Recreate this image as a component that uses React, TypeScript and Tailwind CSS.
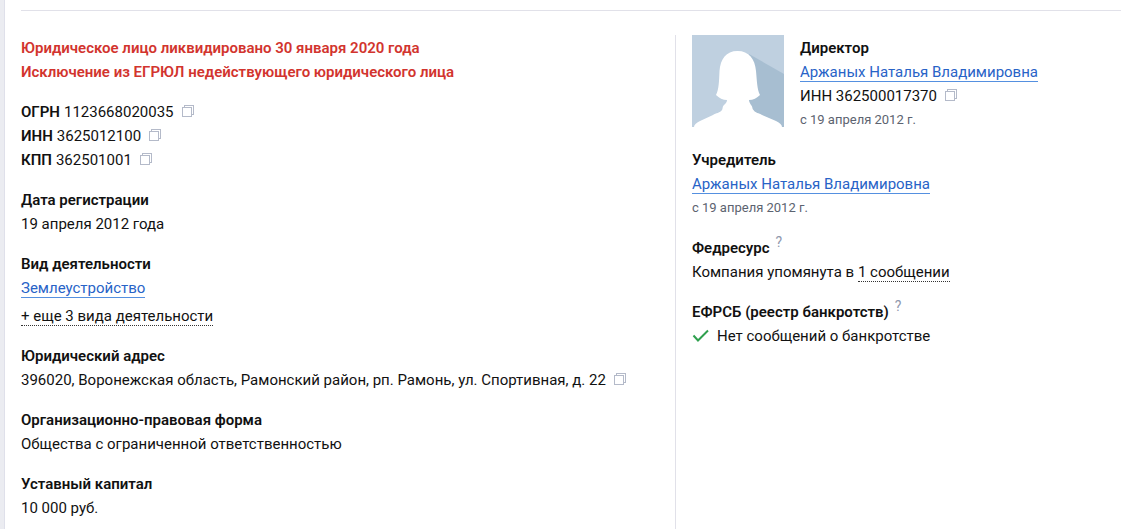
import type { ReactNode } from "react";

interface SectionProps {
  title: string;
  hint?: boolean;
  children: ReactNode;
}

function Section({ title, hint, children }: SectionProps) {
  return (
    <section>
      <div className="flex items-start gap-1.5">
        <h2 className="font-semibold">{title}</h2>
        {hint && (
          <button type="button" aria-label={`Справка: ${title}`} className="text-sm leading-3 text-[#8f98ad]">
            ?
          </button>
        )}
      </div>
      {children}
    </section>
  );
}

function CopyButton({ label }: { label: string }) {
  return (
    <button type="button" aria-label={`Скопировать ${label}`} className="ml-2 inline-block align-baseline">
      <svg width="12" height="12" viewBox="0 0 12 12" fill="none" stroke="#b4bac9" shapeRendering="crispEdges">
        <path d="M.5 2.5h9v9h-9zM2.5 2.5v-2h9v9h-2" />
      </svg>
    </button>
  );
}

function Code({ name, value }: { name: string; value: string }) {
  return (
    <div className="h-6">
      <dt className="mr-1 inline font-semibold">{name}</dt>
      <dd className="inline">
        {value}
        <CopyButton label={name} />
      </dd>
    </div>
  );
}

function PersonLink() {
  return (
    <a href="#person" className="border-b border-[#5590e0] text-[#2863c7]">
      Аржаных Наталья Владимировна
    </a>
  );
}

function Avatar() {
  return (
    <svg width="92" height="92" viewBox="0 0 92 92" className="-mt-px shrink-0" aria-hidden="true">
      <path fill="#bfd0e0" d="M0 0h92v92H0z" />
      <path fill="#a7bed1" d="M57 19l35 20v53H56V50z" />
      <path
        fill="#fff"
        d="M45.500 16C34 16 28.500 24 27.500 36C27 46 27 54 24 60C27 63 31 65 35 65C35 67 34 68 32 70C30 72 31 74 30 75C28 78 24 78 21 80L8 86C4 88 2 90 2 92H90C90 90 88 88 84 86L70 80C67 78 63 78 61.500 75C60 74 61 72 59 70C58 68 57 67 57 65C61 65 65 63 68 60C65 54 65 46 64 36C63 24 57 16 45.500 16Z"
      />
    </svg>
  );
}

export default function App() {
  return (
    <div className="flex min-h-screen bg-white font-['Roboto',sans-serif] text-[15px] leading-6 text-[#111]">
      <div className="w-[5px] shrink-0 border-r border-[#dfe0ea] bg-[#ebecf1]" />
      <main className="flex min-w-0 flex-1 flex-col pt-2.5 pl-4">
        <hr className="border-[#e1e1e9]" />
        <div className="mt-6 grid flex-1 grid-cols-[654fr_446fr]">
          <div className="space-y-4 pt-px">
            <div className="font-semibold text-[#d2342e]">
              <p>Юридическое лицо ликвидировано 30 января 2020 года</p>
              <p>Исключение из ЕГРЮЛ недействующего юридического лица</p>
            </div>
            <dl>
              <Code name="ОГРН" value="1123668020035" />
              <Code name="ИНН" value="3625012100" />
              <Code name="КПП" value="362501001" />
            </dl>
            <Section title="Дата регистрации">
              <p>19 апреля 2012 года</p>
            </Section>
            <Section title="Вид деятельности">
              <p>
                <a href="#activity" className="border-b border-[#5590e0] text-[#2863c7]">
                  Землеустройство
                </a>
              </p>
              <p className="mt-1">
                <a href="#activities" className="border-b border-dotted border-[#333]">
                  + еще 3 вида деятельности
                </a>
              </p>
            </Section>
            <Section title="Юридический адрес">
              <p>
                396020, Воронежская область, Рамонский район, рп. Рамонь, ул. Спортивная, д. 22
                <CopyButton label="адрес" />
              </p>
            </Section>
            <Section title="Организационно-правовая форма">
              <p>Общества с ограниченной ответственностью</p>
            </Section>
            <Section title="Уставный капитал">
              <p>10 000 руб.</p>
            </Section>
          </div>
          <div className="space-y-4 border-l border-[#e1e1e9] pt-px pl-4">
            <div className="flex gap-4">
              <Avatar />
              <Section title="Директор">
                <p>
                  <PersonLink />
                </p>
                <p>
                  ИНН 362500017370
                  <CopyButton label="ИНН директора" />
                </p>
                <p className="text-[13px] leading-6 text-[#5c6370]">с 19 апреля 2012 г.</p>
              </Section>
            </div>
            <Section title="Учредитель">
              <p>
                <PersonLink />
              </p>
              <p className="text-[13px] leading-6 text-[#5c6370]">с 19 апреля 2012 г.</p>
            </Section>
            <Section title="Федресурс" hint>
              <p>
                Компания упомянута в{" "}
                <a href="#messages" className="border-b border-dotted border-[#333]">
                  1 сообщении
                </a>
              </p>
            </Section>
            <Section title="ЕФРСБ (реестр банкротств)" hint>
              <p className="flex items-center gap-2">
                <svg width="17" height="14" viewBox="0 0 17 14" fill="none" stroke="#2fa04e" strokeWidth="2" aria-hidden="true">
                  <path d="M1.500 6.500L6 11.500L16 1.500" />
                </svg>
                Нет сообщений о банкротстве
              </p>
            </Section>
          </div>
        </div>
      </main>
    </div>
  );
}
